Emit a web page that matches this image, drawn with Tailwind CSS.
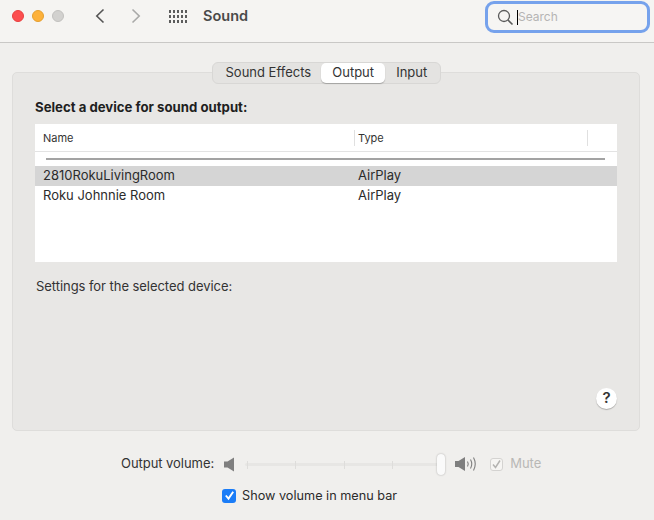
<!DOCTYPE html>
<html lang="en">
<head>
  <meta charset="UTF-8" />
  <title>Sound</title>
  <script src="https://cdn.jsdelivr.net/npm/@tailwindcss/browser@4"></script>
</head>
<body class="w-[654px] h-[520px] overflow-hidden bg-[#f0efed] font-['Inter','Liberation_Sans',sans-serif] text-[13px] text-[#2b2b2b]">

  <!-- toolbar -->
  <header class="h-[43px] bg-[#f5f4f2] border-b border-[#c9c8c6] flex items-center pb-[10px]">
    <div class="flex items-center gap-2 pl-3">
      <span class="w-3 h-3 rounded-full bg-[#fc4e4f] border border-[#e8403f]"></span>
      <span class="w-3 h-3 rounded-full bg-[#fdb13a] border border-[#e59f2f]"></span>
      <span class="w-3 h-3 rounded-full bg-[#d2d1cf] border border-[#c2c1bf]"></span>
    </div>
    <svg class="ml-[31px]" width="10" height="16" viewBox="0 0 10 16" fill="none" stroke-width="1.6"><path d="M8.5 1.5 L1.8 8 L8.5 14.5" stroke="#555555"/></svg>
    <svg class="ml-[26px]" width="10" height="16" viewBox="0 0 10 16" fill="none" stroke-width="1.6"><path d="M1.5 1.5 L8.2 8 L1.5 14.5" stroke="#a9a9a8"/></svg>
    <div class="ml-[28px] grid grid-cols-[repeat(5,2px)] gap-x-[2px] gap-y-[2px]">
      <i class="w-[2px] h-[3px] bg-[#5c5c5c]"></i><i class="w-[2px] h-[3px] bg-[#5c5c5c]"></i><i class="w-[2px] h-[3px] bg-[#5c5c5c]"></i><i class="w-[2px] h-[3px] bg-[#5c5c5c]"></i><i class="w-[2px] h-[3px] bg-[#5c5c5c]"></i>
      <i class="w-[2px] h-[3px] bg-[#5c5c5c]"></i><i class="w-[2px] h-[3px] bg-[#5c5c5c]"></i><i class="w-[2px] h-[3px] bg-[#5c5c5c]"></i><i class="w-[2px] h-[3px] bg-[#5c5c5c]"></i><i class="w-[2px] h-[3px] bg-[#5c5c5c]"></i>
      <i class="w-[2px] h-[3px] bg-[#5c5c5c]"></i><i class="w-[2px] h-[3px] bg-[#5c5c5c]"></i><i class="w-[2px] h-[3px] bg-[#5c5c5c]"></i><i class="w-[2px] h-[3px] bg-[#5c5c5c]"></i><i class="w-[2px] h-[3px] bg-[#5c5c5c]"></i>
    </div>
    <span class="ml-[16px] text-[14.5px] font-semibold text-[#4a4a4a]">Sound</span>
    <!-- search -->
    <div class="ml-auto mr-[4px] mt-[2px] w-[165px] h-[32px] rounded-[9px] border-[3px] border-[#76a2ec] bg-[#f6f5f3] flex items-center pl-[9px]">
      <svg width="17" height="17" viewBox="0 0 17 17" fill="none" stroke="#5b5b5b" stroke-width="1.3"><circle cx="7" cy="7" r="5.5"/><path d="M11 11 L15.5 15.5" stroke-width="1.6"/></svg>
      <span class="ml-[3px] w-px h-[15px] bg-black"></span>
      <span class="text-[12px] text-[#b5b4b3]">Search</span>
    </div>
  </header>

  <main class="pl-3 pr-[14px]">
    <!-- tabbed panel -->
    <section class="mt-[29px] h-[359px] rounded-[5px] bg-[#e8e7e5] border border-[#dedddb] px-[22px]">
      <div class="-mt-[11px] mx-auto w-[229px] h-[22px] rounded-[6px] bg-[#e4e3e1] border border-[#d8d7d5] flex items-center pl-[13px] text-[#333333]">
        <span>Sound Effects</span>
        <span class="ml-[10px] w-[64px] h-[20px] rounded-[5px] bg-white shadow-[0_1px_1px_rgba(0,0,0,0.25)] flex items-center justify-center">Output</span>
        <span class="ml-[11px]">Input</span>
      </div>

      <h2 class="mt-[15px] font-bold text-[13.2px] leading-[16px] text-[#1f1f1f]">Select a device for sound output:</h2>

      <div class="mt-[9px] h-[138px] bg-white">
        <div class="h-[28px] border-b border-[#e3e3e3] flex items-center text-[11px] text-[#333333]">
          <span class="pl-2 w-[319px] pt-[1px]">Name</span>
          <span class="w-[234px] h-[16px] border-l border-r border-[#e0e0e0] pl-[3px] leading-[16px]">Type</span>
        </div>
        <div class="mt-[6px] ml-[11px] w-[559px] h-[2px] bg-[#a3a3a3]"></div>
        <div class="mt-[6px] h-[20px] bg-[#d5d5d5] flex items-center pb-[2px] leading-[18px]">
          <span class="pl-2 w-[323px]">2810RokuLivingRoom</span><span>AirPlay</span>
        </div>
        <div class="h-[20px] flex items-center pb-[2px] leading-[18px]">
          <span class="pl-2 w-[323px]">Roku Johnnie Room</span><span>AirPlay</span>
        </div>
      </div>

      <p class="mt-[16px] ml-px tracking-[-0.05px] leading-[16px] text-[#333333]">Settings for the selected device:</p>

      <div class="mt-[94px] flex justify-end">
        <div class="w-[21px] h-[21px] rounded-full bg-white shadow-[0_1px_1px_rgba(0,0,0,0.25)] flex items-center justify-center font-semibold text-[15px] text-[#333333]">?</div>
      </div>
    </section>

    <!-- volume -->
    <div class="mt-[23px] h-[20px] flex items-center pl-[109px]">
      <span class="tracking-[-0.05px] text-[#333333]">Output volume:</span>
      <svg class="ml-[10px]" width="11" height="15" viewBox="0 0 11 15"><path d="M0 4.5 H3.5 L10 0.5 V14.5 L3.5 10.5 H0 Z" fill="#7f7f7f"/></svg>
      <div class="relative ml-[10px] w-[196px] h-[3px] bg-[#e7e6e4] rounded-full flex justify-between pl-[2px]">
        <i class="w-px h-[8px] -mt-[2px] bg-[#dedddb]"></i><i class="w-px h-[8px] -mt-[2px] bg-[#dedddb]"></i><i class="w-px h-[8px] -mt-[2px] bg-[#dedddb]"></i><i class="w-px h-[8px] -mt-[2px] bg-[#dedddb]"></i><i class="w-px h-[8px] -mt-[2px] bg-[#dedddb]"></i>
        <span class="absolute -right-[4px] -top-[9px] w-[8px] h-[21px] rounded-[5px] bg-[#fafafa] shadow-[0_0_2px_rgba(0,0,0,0.3)]"></span>
      </div>
      <svg class="ml-[14px]" width="23" height="16" viewBox="0 0 23 16" fill="none"><path d="M0 5 H3.5 L10 1 V15 L3.5 11 H0 Z" fill="#7f7f7f"/><path d="M12.5 5.5 Q14 8 12.5 10.5 M15.5 3.5 Q18 8 15.5 12.5 M18.5 1.5 Q22 8 18.5 14.5" stroke="#7f7f7f" stroke-width="1.1"/></svg>
      <span class="ml-[12px] w-[13px] h-[13px] rounded-[3px] border border-[#d4d3d1] bg-[#f6f5f3] flex items-center justify-center">
        <svg width="11" height="11" viewBox="0 0 11 11" fill="none" stroke="#b4b3b1" stroke-width="1.5"><path d="M2 5.5 L4.5 8.5 L9 1.5"/></svg>
      </span>
      <span class="ml-[7px] text-[#b9b8b6]">Mute</span>
    </div>
    <div class="mt-[12px] flex items-center pl-[210px]">
      <span class="w-[14px] h-[14px] rounded-[3px] bg-[#1a7cf7] flex items-center justify-center">
        <svg width="11" height="11" viewBox="0 0 11 11" fill="none" stroke="white" stroke-width="1.9"><path d="M1.8 5.5 L4.5 8.6 L9.2 1.8"/></svg>
      </span>
      <span class="ml-[6px] text-[12.7px] text-[#2b2b2b]">Show volume in menu bar</span>
    </div>
  </main>
</body>
</html>
